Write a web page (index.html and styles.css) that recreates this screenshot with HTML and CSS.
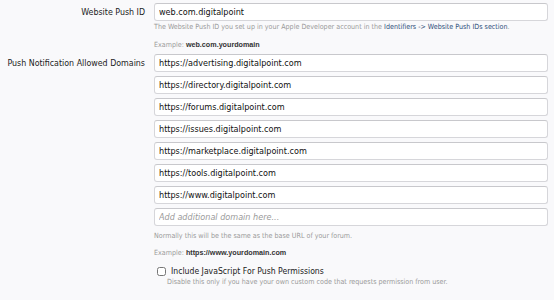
FILE: index.html
```html
<!DOCTYPE html>
<html>
<head>
    <title>Push Options</title>
    <link rel="stylesheet" href="styles.css">
</head>
<body>
<form class="options">
    <div class="row">
        <label class="row-label" for="push_id">Website Push ID</label>
        <div class="row-input">
            <input id="push_id" class="text-box" type="text" value="web.com.digitalpoint">
            <p class="hint first">The Website Push ID you set up in your Apple Developer account in the <a href="#">Identifiers -&gt; Website Push IDs section</a>.</p>
            <p class="hint example">Example: <b>web.com.yourdomain</b></p>
        </div>
    </div>

    <div class="row domains-row">
        <label class="row-label">Push Notification Allowed Domains</label>
        <div class="row-input">
            <ul class="domains">
                <li><input class="text-box" type="text" value="https://advertising.digitalpoint.com"></li>
                <li><input class="text-box" type="text" value="https://directory.digitalpoint.com"></li>
                <li><input class="text-box" type="text" value="https://forums.digitalpoint.com"></li>
                <li><input class="text-box" type="text" value="https://issues.digitalpoint.com"></li>
                <li><input class="text-box" type="text" value="https://marketplace.digitalpoint.com"></li>
                <li><input class="text-box" type="text" value="https://tools.digitalpoint.com"></li>
                <li><input class="text-box" type="text" value="https://www.digitalpoint.com"></li>
                <li><input class="text-box" type="text" placeholder="Add additional domain here..."></li>
            </ul>
            <p class="hint normally">Normally this will be the same as the base URL of your forum.</p>
            <p class="hint example">Example: <b>https://www.yourdomain.com</b></p>

            <label class="check">
                <input type="checkbox">
                <span>Include JavaScript For Push Permissions</span>
            </label>
            <p class="hint check-hint">Disable this only if you have your own custom code that requests permission from user.</p>
        </div>
    </div>
</form>
</body>
</html>
```

FILE: styles.css
```css
body {
    margin: 0;
    background-color: #f9f9fb;
    font-family: "DejaVu Sans Condensed", "DejaVu Sans", sans-serif;
    color: #222;
}

.options {
    padding: 3px 6px 0 0;
}

.row {
    display: grid;
    grid-template-columns: 145px 1fr;
    column-gap: 9px;
}

.domains-row {
    margin-top: 4px;
}

.row-label {
    text-align: right;
    font-size: 8.8px;
    line-height: 18px;
    color: #222;
}

.text-box {
    display: block;
    width: 100%;
    height: 18px;
    margin: 0;
    padding: 0 4px;
    box-sizing: border-box;
    border: 1px solid #d6d6da;
    border-top-color: #c8c8cc;
    border-radius: 3px;
    background: #fff;
    font-family: inherit;
    font-size: 9px;
    color: #111;
}

.text-box::placeholder {
    font-style: italic;
    color: #9a9a9a;
}

.hint {
    margin: 0;
    font-size: 7.1px;
    line-height: 10px;
    color: #9a9a9a;
}

.hint a {
    color: #2f4f7a;
    text-decoration: none;
}

.hint b {
    font-family: "Liberation Sans", sans-serif;
    font-size: 7.2px;
    color: #333;
}

.first {
    margin-top: 1px;
}

.example {
    margin-top: 8px;
}

.normally {
    margin-top: 5px;
}

.normally + .example {
    margin-top: 7px;
}

.domains {
    list-style: none;
    margin: 0;
    padding: 0;
}

.domains li {
    margin-bottom: 4px;
}

.domains li:last-child {
    margin-bottom: 0;
}

.check {
    display: flex;
    align-items: center;
    margin: 8px 0 0 3px;
    font-size: 8.6px;
    line-height: 11px;
    color: #222;
}

.check input {
    width: 9px;
    height: 9px;
    margin: 0 5px 0 0;
}

.check-hint {
    margin: 0 0 0 13px;
}
```
